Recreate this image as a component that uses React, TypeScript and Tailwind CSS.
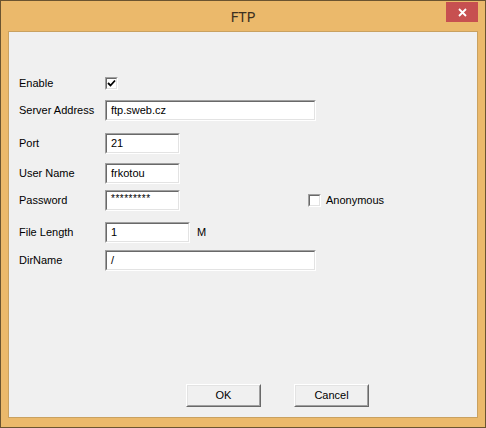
import React from "react";

const font = { fontFamily: '"Liberation Sans", Arial, sans-serif' };

function Sunken({ w, value, small }: { w: number; value: string; small?: boolean }) {
  return (
    <div
      className="h-[21px] border border-t-[#a0a0a0] border-l-[#a0a0a0] border-b-white border-r-white"
      style={{ width: w }}
    >
      <div className="h-full w-full bg-white border border-t-[#696969] border-l-[#696969] border-b-[#e3e3e3] border-r-[#e3e3e3] flex items-center pl-[4px] text-[11px] text-black">
        <span className={small ? "text-[10px] -mt-[4px] tracking-[0.5px]" : ""}>{value}</span>
      </div>
    </div>
  );
}

function Check({ checked }: { checked?: boolean }) {
  return (
    <div className="w-[13px] h-[13px] border border-t-[#a0a0a0] border-l-[#a0a0a0] border-b-white border-r-white">
      <div className="w-full h-full bg-white border border-t-[#696969] border-l-[#696969] border-b-[#e3e3e3] border-r-[#e3e3e3] flex items-center justify-center">
        {checked && (
          <svg width="9" height="9" viewBox="0 0 9 9">
            <path d="M1 4 L3.5 6.5 L8 1.5" stroke="#000" strokeWidth="1.8" fill="none" />
          </svg>
        )}
      </div>
    </div>
  );
}

function Btn({ label }: { label: string }) {
  return (
    <div className="w-[75px] h-[23px] border border-t-white border-l-white border-b-[#696969] border-r-[#696969]">
      <div className="w-full h-full bg-[#f0f0f0] border border-t-[#e3e3e3] border-l-[#e3e3e3] border-b-[#a0a0a0] border-r-[#a0a0a0] flex items-center justify-center text-[11px] text-black">
        {label}
      </div>
    </div>
  );
}

function Row({ label, top, children }: { label: string; top: number; children: React.ReactNode }) {
  return (
    <div className="flex items-center h-[21px]" style={{ marginTop: top }}>
      <div className="w-[86px] text-[11px] text-black">{label}</div>
      {children}
    </div>
  );
}

export default function App() {
  return (
    <div className="w-[486px] h-[428px] bg-[#ebb96b] border border-[#6b5430] flex flex-col" style={font}>
      <div className="relative h-[30px] flex items-center justify-center">
        <span className="text-[15px] text-[#3c3020]" style={{ fontFamily: '"Noto Sans", sans-serif' }}>
          FTP
        </span>
        <div className="absolute right-[7px] top-[1px] w-[32px] h-[20px] bg-[#c75050] flex items-center justify-center">
          <svg width="9" height="9" viewBox="0 0 9 9">
            <path d="M1 1 L8 8 M8 1 L1 8" stroke="#fff" strokeWidth="1.8" />
          </svg>
        </div>
      </div>
      <div className="mx-[7px] h-[387px] bg-[#f0f0f0] border border-[#c9a160] flex flex-col pl-[10px]">
        <Row label="Enable" top={41}>
          <Check checked />
        </Row>
        <Row label="Server Address" top={6}>
          <Sunken w={211} value="ftp.sweb.cz" />
        </Row>
        <Row label="Port" top={12}>
          <Sunken w={75} value="21" />
        </Row>
        <Row label="User Name" top={9}>
          <Sunken w={75} value="frkotou" />
        </Row>
        <Row label="Password" top={6}>
          <Sunken w={75} value="*********" small />
          <div className="ml-[128px] flex items-center">
            <Check />
            <span className="ml-[5px] text-[11px] text-black">Anonymous</span>
          </div>
        </Row>
        <Row label="File Length" top={11}>
          <Sunken w={85} value="1" />
          <span className="ml-[7px] text-[11px] text-black">M</span>
        </Row>
        <Row label="DirName" top={7}>
          <Sunken w={211} value="/" />
        </Row>
        <div className="flex mt-[113px] pl-[167px] gap-[33px]">
          <Btn label="OK" />
          <Btn label="Cancel" />
        </div>
      </div>
    </div>
  );
}
